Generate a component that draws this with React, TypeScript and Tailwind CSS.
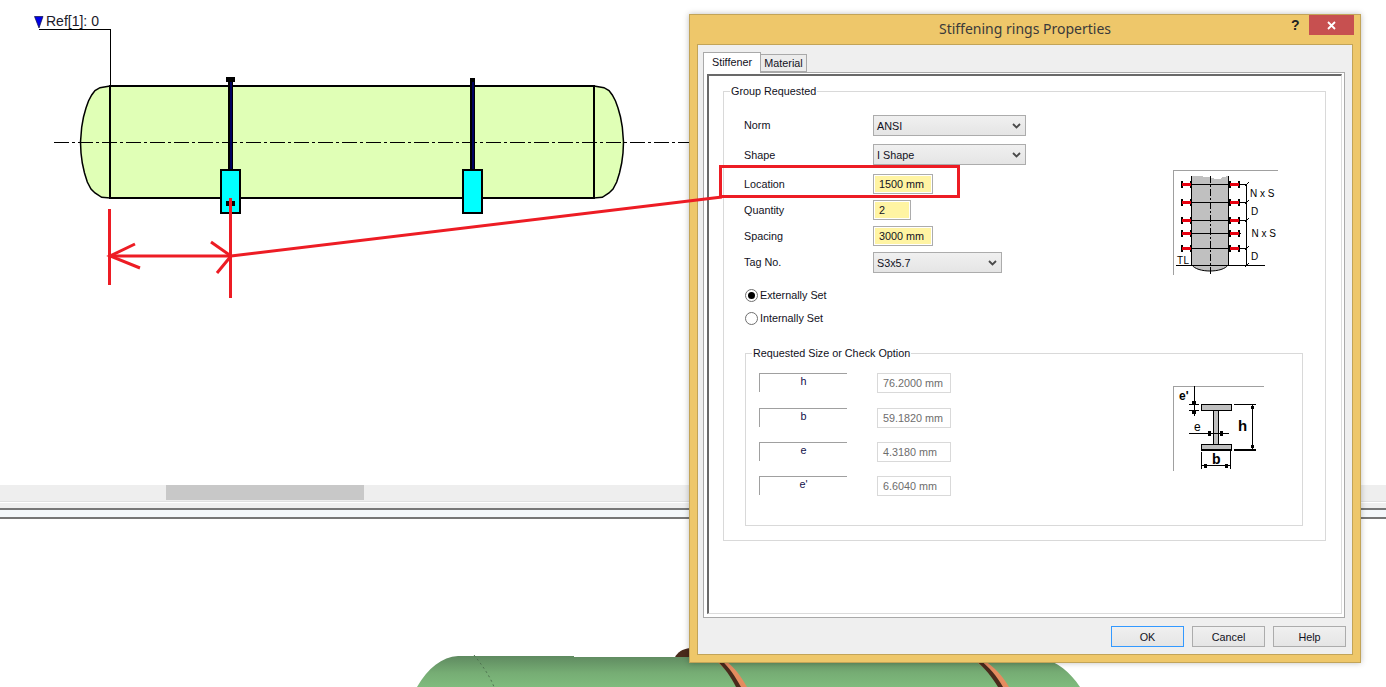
const fieldRow = "grid grid-cols-[129px_auto] items-center";

function Chevron() {
  return (
    <svg width="9" height="6" viewBox="0 0 9 6" className="shrink-0">
      <path d="M1 1 L4.5 4.5 L8 1" fill="none" stroke="#4a4a4a" strokeWidth="1.8" />
    </svg>
  );
}

function Dropdown({ value, className }: { value: string; className: string }) {
  return (
    <div className={`flex items-center justify-between border border-[#acacac] bg-gradient-to-b from-[#f0f0f0] to-[#e5e5e5] pl-[3px] pr-[4px] ${className}`}>
      <span>{value}</span>
      <Chevron />
    </div>
  );
}

function YellowInput({ value, className }: { value: string; className: string }) {
  return (
    <div className={`flex items-center border border-[#acacac] bg-[#fff4a3] pl-[5px] shadow-[inset_0_0_0_1px_#ffffff] ${className}`}>
      {value}
    </div>
  );
}

function Radio({ label, checked }: { label: string; checked?: boolean }) {
  return (
    <div className="flex h-[16px] items-center gap-[2px] pl-[21px]">
      <span className="flex h-[13px] w-[13px] items-center justify-center rounded-full border border-[#6f6f6f] bg-white">
        {checked && <span className="h-[7px] w-[7px] rounded-full bg-black" />}
      </span>
      <span>{label}</span>
    </div>
  );
}

function SizeRow({ name, value, className }: { name: string; value: string; className?: string }) {
  return (
    <div className={`flex h-[20px] ${className ?? ""}`}>
      <div className="h-[19px] w-[88px] border-l border-t border-[#a0a0a0] text-center leading-[14px] text-[#10104a]">{name}</div>
      <div className="ml-[30px] flex h-[20px] w-[74px] items-center border border-[#d9d9d9] pl-[5px] text-[#6d6d6d]">{value}</div>
    </div>
  );
}

function DialogButton({ label, focused }: { label: string; focused?: boolean }) {
  return (
    <div className={`flex h-[21px] w-[73px] items-center justify-center border bg-gradient-to-b from-[#f0f0f0] to-[#e5e5e5] ${focused ? "border-[#3399ff]" : "border-[#acacac]"}`}>
      {label}
    </div>
  );
}

function RingDiagram() {
  const levels = [14, 32, 50, 63, 78];
  return (
    <svg width="106" height="105" viewBox="0 0 106 105" className="block" fontFamily="Liberation Sans, sans-serif" fontSize="10" shapeRendering="crispEdges">
      <path d="M0.5 105 V0.5 H105" fill="none" stroke="#a0a0a0" />
      <path d="M19 6 L27 6 L32 7 L37 7 L42 9 L47 9 L50 7 L55 6 V95 C50 103 25 103 19 95 Z" fill="#c0c0c0" />
      <path d="M18.5 6 V95 M55.5 6 V95" stroke="#000" fill="none" />
      <path d="M19 95 C24 103 50 103 55 95" stroke="#000" fill="none" shapeRendering="auto" />
      <path d="M37.5 6 V105" stroke="#000" strokeDasharray="7 2 2 2" />
      {levels.map((y) => (
        <g key={y}>
          <path d={`M19 ${y + 0.5} H${y === 63 ? 68 : 74}`} stroke="#000" />
          <rect x="8" y={y - 3} width="2" height="7" fill="#000" />
          <rect x="17" y={y - 3} width="2" height="7" fill="#000" />
          <rect x="9" y={y - 1} width="9" height="3" fill="#e8000f" />
          <rect x="56" y={y - 3} width="2" height="7" fill="#000" />
          <rect x="65" y={y - 3} width="2" height="7" fill="#000" />
          <rect x="57" y={y - 1} width="9" height="3" fill="#e8000f" />
          {y !== 63 && <path d={`M72 ${y + 2} L76 ${y - 2}`} stroke="#000" />}
        </g>
      ))}
      <path d="M73.5 14 V96 M3 95.5 H92" stroke="#000" />
      <path d="M72 97 L76 93" stroke="#000" />
      <text x="77" y="27">N x S</text>
      <text x="78" y="45">D</text>
      <text x="78.5" y="67">N x S</text>
      <text x="78" y="90">D</text>
      <text x="4" y="94" letterSpacing="0.5">TL</text>
    </svg>
  );
}

function SectionDiagram() {
  return (
    <svg width="91" height="85" viewBox="0 0 91 85" className="block" fontFamily="Liberation Sans, sans-serif" fontWeight="700" shapeRendering="crispEdges">
      <path d="M0.5 85 V0.5 H91" fill="none" stroke="#a0a0a0" />
      <rect x="28.5" y="18.5" width="30" height="6" fill="#c0c0c0" stroke="#000" />
      <rect x="40.5" y="24.5" width="5" height="34" fill="#c0c0c0" stroke="#000" />
      <rect x="28.5" y="58.5" width="30" height="6" fill="#c0c0c0" stroke="#000" />
      <rect x="28" y="63" width="31" height="2" fill="#000" />
      <path d="M61 18.5 H83 M79.5 18 V63" stroke="#000" />
      <rect x="61" y="63" width="22" height="2" fill="#000" />
      <rect x="78" y="20" width="3" height="3" fill="#000" />
      <rect x="78" y="59" width="3" height="3" fill="#000" />
      <text x="65" y="45" fontSize="15">h</text>
      <path d="M28.5 66 V83 M57.5 65 V83 M29 79.5 H57" stroke="#000" />
      <rect x="31" y="78" width="3" height="4" fill="#000" />
      <rect x="52" y="78" width="3" height="4" fill="#000" />
      <text x="39" y="78" fontSize="14">b</text>
      <path d="M16 47.5 H56" stroke="#000" />
      <rect x="35" y="45" width="3" height="5" fill="#000" />
      <rect x="47" y="45" width="3" height="5" fill="#000" />
      <text x="21" y="45" fontSize="12" fontWeight="400">e</text>
      <path d="M21 0 V30 M16 18.5 H26 M16 24.5 H26" stroke="#000" />
      <rect x="19" y="15" width="4" height="3" fill="#000" />
      <rect x="19" y="25" width="4" height="3" fill="#000" />
      <text x="6" y="14" fontSize="12">e'</text>
    </svg>
  );
}

// head outline traced from the drawing, right head is the same shape mirrored
const headPoints: [number, number][] = [
  [110, 86], [100, 87.7], [95, 90.5], [91.7, 95], [88.5, 101], [86, 108], [83.5, 117], [81.7, 127], [80.5, 142],
  [81, 153], [82.3, 163], [84.5, 173], [87.3, 182], [91, 189], [95, 193], [101.7, 197.3], [110, 198],
];

function VesselDrawing() {
  const rings = [
    { x: 230.5, cap: true },
    { x: 472.5, cap: false },
  ];
  const leftHead = headPoints.map(([x, y]) => `${x},${y}`).join(" ");
  const rightHead = headPoints.map(([x, y]) => `${704 - x},${y}`).join(" ");
  return (
    <svg width="1386" height="485" viewBox="0 0 1386 485" className="block">
      <rect x="110" y="86" width="484" height="112" fill="#e0ffb6" />
      <polygon points={leftHead} fill="#e0ffb6" stroke="#000" strokeWidth="1.5" />
      <polygon points={rightHead} fill="#e0ffb6" stroke="#000" strokeWidth="1.5" />
      <path d="M109 86 H595 M109 198 H595 M110 86 V198 M594 86 V198" stroke="#000" strokeWidth="2" fill="none" shapeRendering="crispEdges" />
      <path d="M54 142.5 H690" stroke="#000" strokeDasharray="15 3 3 3" shapeRendering="crispEdges" />
      <path d="M38.5 29.5 H110.5 V86" fill="none" stroke="#000" shapeRendering="crispEdges" />
      <path d="M34.5 16.5 H43 L39 28 Z" fill="#0000e8" stroke="#101040" strokeWidth="0.7" />
      <text x="46" y="26" fontFamily="Liberation Sans, sans-serif" fontSize="14" fill="#1a1a2a">Ref[1]: 0</text>
      {rings.map((r) => (
        <g key={r.x} shapeRendering="crispEdges">
          <rect x={r.x - 2.5} y="78" width="5" height="92" fill="#000" />
          <rect x={r.x - 0.5} y="82" width="2" height="87" fill="#000060" />
          {r.cap && <rect x={r.x - 4.5} y="77" width="9" height="5" fill="#000" />}
          <rect x={r.x - 9.5} y="170" width="19" height="43" fill="#00ffff" stroke="#000" strokeWidth="2" />
          {r.cap && <rect x={r.x - 4.5} y="201" width="9" height="5" fill="#000" />}
        </g>
      ))}
    </svg>
  );
}

function Vessel3D() {
  return (
    <svg width="1386" height="168" viewBox="0 519 1386 168" className="block">
      <defs>
        <linearGradient id="shell" x1="0" y1="0" x2="0" y2="1">
          <stop offset="0" stopColor="#5f8a60" />
          <stop offset="0.55" stopColor="#76ad74" />
          <stop offset="1" stopColor="#7fbb7d" />
        </linearGradient>
      </defs>
      <path d="M675 657 C678 652 682 649 690 648 V660 H675 Z" fill="#4a2a1c" />
      <path d="M417 687 C428 668 442 657 458 656 L574 656 L574 657 L1040 657 C1058 662 1070 672 1080 687 Z" fill="url(#shell)" />
      <path d="M474 655 C482 665 490 676 494 687" fill="none" stroke="#4f7350" strokeDasharray="2 3" />
      <path d="M715 660 C725 668 733 677 739 687 L747 687 C741 676 734 667 725 660 Z" fill="#e58c5f" />
      <path d="M716 660 C725 668 731 677 736 687 L741 687 C735 676 729 667 721 660 Z" fill="#4a2a1c" />
      <path d="M974 660 C985 668 995 677 1001 687 L1009 687 C1003 676 994 667 984 660 Z" fill="#e58c5f" />
      <path d="M975 660 C985 668 992 677 998 687 L1003 687 C997 676 989 667 980 660 Z" fill="#4a2a1c" />
    </svg>
  );
}

function Annotations() {
  return (
    <svg width="1386" height="687" viewBox="0 0 1386 687" className="pointer-events-none absolute left-0 top-0" fill="none" stroke="#ed1c24">
      <path d="M109.5 209 V285 M230.5 198 V298" strokeWidth="3" />
      <path d="M108 256 H231" strokeWidth="3" />
      <path d="M135 244 L110 256 L140 268 M211 242 L231 256 L217 273" strokeWidth="3" />
      <path d="M231 256 L722 197" strokeWidth="3" />
      <rect x="720.5" y="166.5" width="238" height="30" strokeWidth="3" />
    </svg>
  );
}

function PropertiesDialog() {
  return (
    <div className="absolute left-[689px] top-[14px] flex h-[649px] w-[672px] flex-col border border-[#c2a458] bg-[#eec76a] font-['Liberation_Sans',sans-serif] text-[10.8px] leading-[14px] text-[#111122] shadow-[0_0_6px_rgba(0,0,0,0.25)]">
      <div className="relative flex h-[29px] shrink-0 items-center justify-center pb-[1px] font-['Noto_Sans',sans-serif] text-[14px] text-[#3a3a3a]">
        Stiffening rings Properties
        <span className="absolute left-[601px] top-[1px] font-['Liberation_Sans',sans-serif] text-[14px] font-bold leading-[18px] text-[#222]">?</span>
        <div className="absolute right-[6px] top-0 flex h-[20px] w-[45px] items-center justify-center bg-[#c75050]">
          <svg width="9" height="9" viewBox="0 0 9 9">
            <path d="M1 1 L8 8 M8 1 L1 8" stroke="#fff" strokeWidth="1.8" />
          </svg>
        </div>
      </div>

      <div className="mx-[7px] mb-[7px] flex flex-1 flex-col border border-[#c2a458] bg-[#efefef]">
        <div className="relative z-10 ml-[5px] mt-[7px] flex h-[21px] items-end">
          <div className="flex h-[21px] w-[58px] items-center justify-center border border-b-0 border-[#a9a9a9] bg-white pb-[3px]">Stiffener</div>
          <div className="mb-[1px] flex h-[18px] w-[46px] items-center justify-center border border-l-0 border-[#a9a9a9] bg-[#ececec]">Material</div>
        </div>

        <div className="ml-[5px] mr-[7px] -mt-[1px] h-[546px] border border-[#a9a9a9] bg-white pb-[3px] pl-[3px] pr-[2px] pt-px">
          <div className="h-full border-b border-l-2 border-r border-t-2 border-b-[#dcdcdc] border-l-[#696969] border-r-[#dcdcdc] border-t-[#696969] pl-[14px] pr-[15px] pt-[8px]">
            <fieldset className="h-[457px] border border-[#d9d9d9]">
              <legend className="ml-[6px] h-[14px] px-px">Group Requested</legend>
              <div className="flex">
                <div className="w-[449px] shrink-0">
                  <div className="pl-[20px] pt-[17px]">
                    <div className={fieldRow}>
                      <span className="pb-[2px]">Norm</span>
                      <Dropdown value="ANSI" className="h-[21px] w-[153px]" />
                    </div>
                    <div className={`${fieldRow} mt-[8px]`}>
                      <span>Shape</span>
                      <Dropdown value="I Shape" className="h-[21px] w-[153px]" />
                    </div>
                    <div className={`${fieldRow} mt-[9px]`}>
                      <span>Location</span>
                      <YellowInput value="1500 mm" className="h-[20px] w-[60px]" />
                    </div>
                    <div className={`${fieldRow} mt-[6px]`}>
                      <span>Quantity</span>
                      <YellowInput value="2" className="h-[20px] w-[38px]" />
                    </div>
                    <div className={`${fieldRow} mt-[6px]`}>
                      <span>Spacing</span>
                      <YellowInput value="3000 mm" className="h-[20px] w-[60px]" />
                    </div>
                    <div className={`${fieldRow} mt-[6px]`}>
                      <span className="pb-[2px]">Tag No.</span>
                      <Dropdown value="S3x5.7" className="h-[21px] w-[129px]" />
                    </div>
                  </div>
                  <div className="mt-[14px]">
                    <Radio label="Externally Set" checked />
                  </div>
                  <div className="mt-[7px]">
                    <Radio label="Internally Set" />
                  </div>
                </div>
                <div className="mt-[72px]">
                  <RingDiagram />
                </div>
              </div>

              <fieldset className="ml-[21px] mt-[20px] h-[180px] w-[558px] border border-[#d9d9d9]">
                <legend className="ml-[6px] h-[14px] px-px">Requested Size or Check Option</legend>
                <div className="flex">
                  <div className="w-[427px] shrink-0 pl-[13px] pt-[13px]">
                    <SizeRow name="h" value="76.2000 mm" />
                    <SizeRow name="b" value="59.1820 mm" className="mt-[15px]" />
                    <SizeRow name="e" value="4.3180 mm" className="mt-[14px]" />
                    <SizeRow name="e'" value="6.6040 mm" className="mt-[14px]" />
                  </div>
                  <div className="mt-[26px]">
                    <SectionDiagram />
                  </div>
                </div>
              </fieldset>
            </fieldset>
          </div>
        </div>

        <div className="mr-[6px] mt-[8px] flex justify-end gap-[8px]">
          <DialogButton label="OK" focused />
          <DialogButton label="Cancel" />
          <DialogButton label="Help" />
        </div>
      </div>
    </div>
  );
}

export default function App() {
  return (
    <div className="relative h-[687px] w-[1386px] overflow-hidden bg-white">
      <VesselDrawing />

      {/* scrollbar under the 2d view */}
      <div className="h-[16px] bg-[#eeeeee] pl-[166px]">
        <div className="h-[15px] w-[198px] bg-[#c8c8c8]" />
      </div>
      <div className="h-px bg-[#e0e0e0]" />
      <div className="h-px bg-white" />
      <div className="h-[5px] bg-[#efefef]" />
      <div className="h-[2px] bg-[#777777]" />
      <div className="h-[7px] bg-[#f4f8fb]" />
      <div className="h-[2px] bg-[#777777]" />

      <Vessel3D />
      <PropertiesDialog />
      <Annotations />
    </div>
  );
}
